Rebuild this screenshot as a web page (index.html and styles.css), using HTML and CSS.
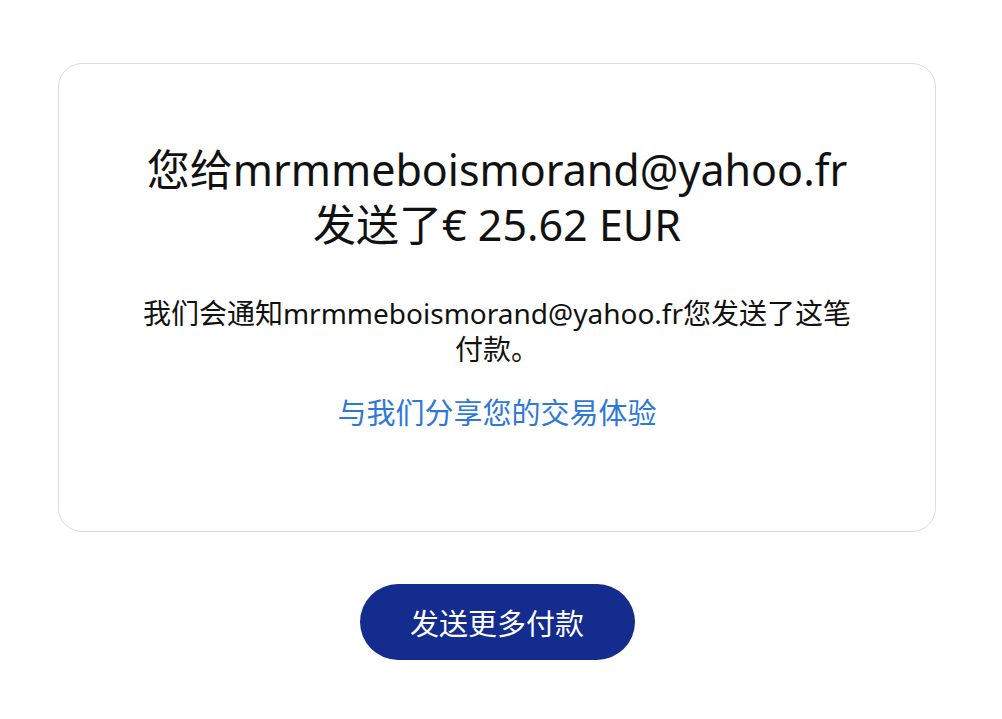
FILE: index.html
```html
<!DOCTYPE html>
<html lang="zh-CN">
<head>
  <meta charset="UTF-8">
  <meta name="viewport" content="width=device-width, initial-scale=1.0">
  <title>付款已发送</title>
  <link rel="stylesheet" href="styles.css">
</head>
<body>
  <main class="page">
    <section class="result-card">
      <h1 class="result-title">您给mrmmeboismorand@yahoo.fr发送了€ 25.62 EUR</h1>
      <p class="result-note">我们会通知mrmmeboismorand@yahoo.fr您发送了这笔付款。</p>
      <a href="#" class="feedback-link">与我们分享您的交易体验</a>
    </section>

    <a href="#" class="send-more-btn">发送更多付款</a>
  </main>
</body>
</html>
```

FILE: styles.css
```css
* { margin: 0; padding: 0; box-sizing: border-box; }
body, html { width: 100%; background: #fff; }
body {
  font-family: "Noto Sans", "Noto Sans CJK SC", sans-serif;
  color: #111;
}
.page {
  width: 878px;
  margin-left: 58px;
  padding-top: 63px;
  display: flex;
  flex-direction: column;
  align-items: center;
}
.result-card {
  width: 100%;
  height: 469px;
  border: 1px solid #dcdcdc;
  border-radius: 24px;
  padding-top: 78px;
  display: flex;
  flex-direction: column;
  align-items: center;
  text-align: center;
}
.result-title {
  max-width: 730px;
  font-size: 43px;
  font-weight: 400;
  line-height: 55px;
}
.result-note {
  max-width: 730px;
  margin-top: 43px;
  font-size: 28px;
  line-height: 36px;
}
.feedback-link {
  margin-top: 26px;
  font-size: 29px;
  line-height: 40px;
  color: #2e78d6;
  text-decoration: none;
}
.send-more-btn {
  margin-top: 52px;
  width: 275px;
  height: 76px;
  border-radius: 38px;
  background: #142c8e;
  color: #fff;
  font-size: 29px;
  display: flex;
  justify-content: center;
  align-items: center;
  text-decoration: none;
}
```
